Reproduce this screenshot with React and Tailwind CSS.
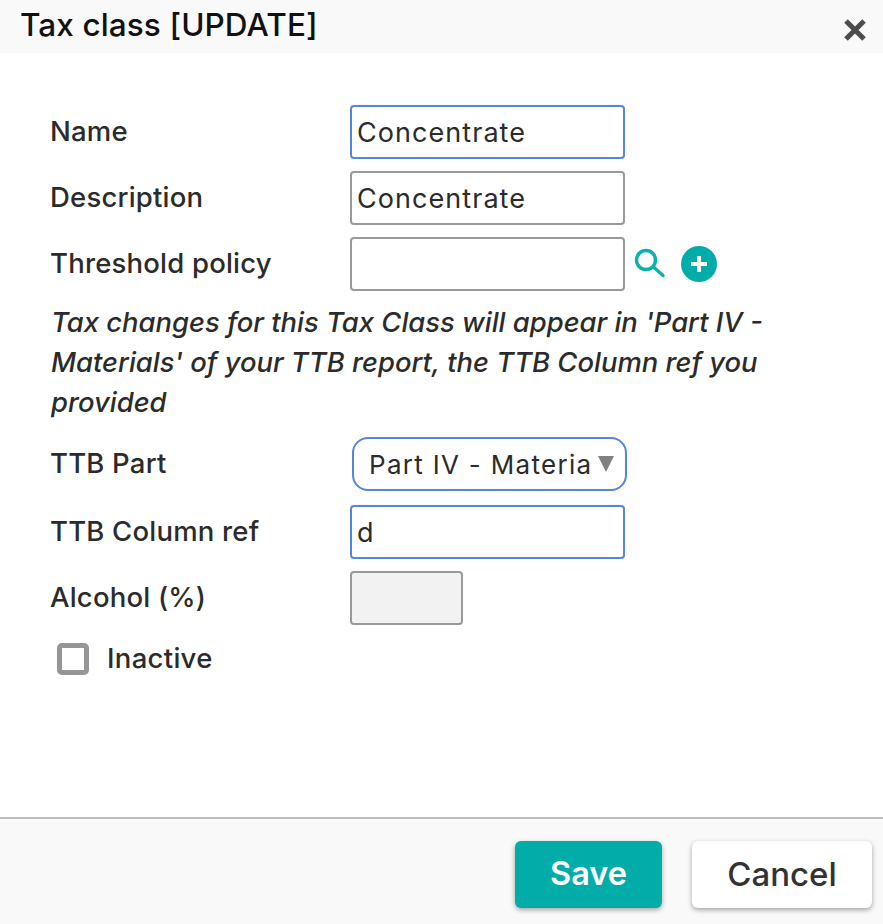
const font = "font-['Inter','Liberation_Sans',sans-serif]"

const Field = ({ label, children }) => (
  <div className="flex items-center h-[54px]">
    <label className="w-[300px] text-[27.5px] font-medium text-[#2b2b2b] tracking-[0.2px]">{label}</label>
    {children}
  </div>
)

const TextInput = ({ value, focused, disabled, width = 'w-[275px]' }) => (
  <input
    readOnly
    value={value}
    className={`${width} h-[54px] rounded-[4px] border-2 px-[5px] text-[27px] text-[#2b2b2b] tracking-[1.05px] outline-none ${
      focused ? 'border-[#5585dd]' : 'border-[#999999]'
    } ${disabled ? 'bg-[#f2f2f2]' : 'bg-white'}`}
  />
)

export default function App() {
  return (
    <div className={`${font} w-[883px] h-[924px] flex flex-col bg-white overflow-hidden`}>
      <div className="h-[53px] shrink-0 bg-[#f9f9f9] flex justify-between pl-[20px] pr-[14px]">
        <h1 className="text-[31.5px] font-medium text-[#111111] leading-[49px] tracking-[0.1px]">Tax class [UPDATE]</h1>
        <button className="mt-[15px] h-[30px] text-[#4d4d4d]">
          <svg width="28" height="28" viewBox="0 0 28 28" fill="none" stroke="currentColor" strokeWidth="5">
            <path d="M5 5 L23 23 M23 5 L5 23" />
          </svg>
        </button>
      </div>

      <div className="flex-1 pt-[52px] pl-[50px]">
        <div className="flex flex-col gap-[12px]">
          <Field label="Name"><TextInput value="Concentrate" focused /></Field>
          <Field label="Description"><TextInput value="Concentrate" /></Field>
          <Field label="Threshold policy">
            <TextInput value="" />
            <svg className="ml-[8px] text-[#0fb0aa]" width="34" height="34" viewBox="0 0 34 34" fill="none" stroke="currentColor" strokeWidth="3.4" strokeLinecap="round">
              <circle cx="13" cy="13" r="9.5" />
              <path d="M20.5 20 L30 28.5" />
            </svg>
            <span className="ml-[14px] w-[36px] h-[36px] rounded-full bg-[#02ada9] flex items-center justify-center">
              <svg width="18" height="18" viewBox="0 0 18 18" fill="none" stroke="white" strokeWidth="4">
                <path d="M9 1 V17 M1 9 H17" />
              </svg>
            </span>
          </Field>
        </div>

        <p className="mt-[11px] ml-[1px] w-[780px] text-[27.4px] italic font-medium leading-[40px] text-[#2b2b2b]">
          Tax changes for this Tax Class will appear in 'Part IV - Materials' of your TTB report, the TTB Column ref you provided
        </p>

        <div className="mt-[15px] flex flex-col">
          <Field label="TTB Part">
            <div className="ml-[2px] w-[275px] h-[54px] rounded-[16px] border-2 border-[#5585dd] bg-white flex items-center pl-[15px] overflow-hidden">
              <span className="text-[26px] text-[#2b2b2b] tracking-[1.3px] whitespace-nowrap">Part IV - Materia</span>
              <span className="ml-auto mr-[11px] w-0 h-0 border-x-[8px] border-x-transparent border-t-[16px] border-t-[#808080]" />
            </div>
          </Field>
        </div>
        <div className="mt-[14px] flex flex-col gap-[12px]">
          <Field label="TTB Column ref"><TextInput value="d" focused /></Field>
          <Field label="Alcohol (%)"><TextInput value="" disabled width="w-[113px]" /></Field>
        </div>

        <div className="mt-[18px] ml-[7px] flex items-center h-[32px]">
          <span className="w-[32px] h-[32px] rounded-[5px] border-[5px] border-[#969696] bg-white blur-[0.5px]" />
          <span className="ml-[18px] text-[27.5px] font-medium text-[#2b2b2b] tracking-[0.3px]">Inactive</span>
        </div>
      </div>

      <div className="h-[107px] shrink-0 border-t-2 border-[#bdbdbd] bg-[#f9f9f9] flex justify-end gap-[30px] pt-[22px] pr-[11px]">
        <button className="w-[147px] h-[67px] rounded-[6px] bg-[#02ada9] text-white text-[32.5px] font-semibold shadow-[0_2px_5px_rgba(0,0,0,0.35)]">Save</button>
        <button className="w-[180px] h-[67px] rounded-[6px] bg-white text-[#333333] text-[33px] font-medium shadow-[0_2px_5px_rgba(0,0,0,0.35)]">Cancel</button>
      </div>
    </div>
  )
}
